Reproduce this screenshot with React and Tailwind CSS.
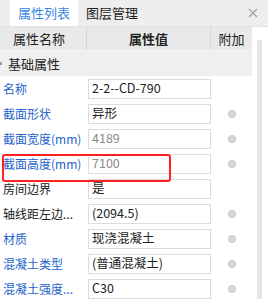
const ROWS = [
  { name: "名称", value: "2-2--CD-790", blue: true },
  { name: "截面形状", value: "异形", blue: true, dot: true },
  { name: "截面宽度(mm)", value: "4189", blue: true, gray: true, dot: true },
  { name: "截面高度(mm)", value: "7100", blue: true, gray: true, dot: true },
  { name: "房间边界", value: "是" },
  { name: "轴线距左边...", value: "(2094.5)", dot: true },
  { name: "材质", value: "现浇混凝土", blue: true, dot: true },
  { name: "混凝土类型", value: "(普通混凝土)", blue: true, dot: true },
  { name: "混凝土强度...", value: "C30", blue: true, dot: true },
];

const cols = "grid grid-cols-[87px_124px_41px]";

export default function App() {
  return (
    <div
      className="relative w-[268px] h-[299px] overflow-hidden bg-white text-[12px] text-[#222]"
      style={{ fontFamily: '"Microsoft YaHei", "Noto Sans CJK SC", "Noto Sans", sans-serif' }}
    >
      {/* tabs */}
      <div className="flex h-[27px] items-stretch bg-[#eeeeef] border-b border-[#e2e2e2] pl-[10px] text-[13px]">
        <div className="flex w-[68px] items-center justify-center bg-white text-[#3a86e6]">属性列表</div>
        <div className="flex w-[68px] items-center justify-center">图层管理</div>
        <div className="flex-1" />
        <div className="flex w-[30px] items-center justify-center">
          <svg width="10" height="10" viewBox="0 0 10 10">
            <path d="M1 1 L9 9 M9 1 L1 9" stroke="#a0a0a0" strokeWidth="1.2" />
          </svg>
        </div>
      </div>

      <div className="flex">
        <div className="w-[252px]">
          {/* header */}
          <div className={`${cols} h-[24px] bg-[#e9e9e9] border-b border-[#f6f6f6] text-[13px]`}>
            <div className="flex items-center pl-[13px] border-r border-[#d6d6d6]">属性名称</div>
            <div className="flex items-center justify-center border-r border-[#d6d6d6] font-bold">属性值</div>
            <div className="flex items-center justify-center">附加</div>
          </div>
          {/* group */}
          <div className="flex h-[25px] items-center bg-[#efefef] text-[13px]">
            <div className="h-[3px] w-[2px] bg-[#999]" />
            <div className="pl-[6px]">基础属性</div>
          </div>
          {ROWS.map((r) => (
            <div key={r.name} className={`${cols} h-[25px] items-center text-[12.5px]`}>
              <div className={`pl-[3px] whitespace-nowrap text-[12px] ${r.blue ? "text-[#2563c9]" : "text-[#222]"}`}>{r.name}</div>
              <div
                className={`flex h-[20px] items-center border border-[#dcdcdc] pl-[3px] ml-[1px] whitespace-nowrap overflow-hidden ${r.gray ? "text-[#8a8a8a]" : "text-[#222]"}`}
              >
                {r.value}
              </div>
              <div className="flex items-center justify-center">
                {r.dot && <div className="h-[8px] w-[8px] rounded-full bg-[#d8d8d8] border border-[#c2c2c2]" />}
              </div>
            </div>
          ))}
        </div>
        {/* scrollbar */}
        <div className="flex-1 pl-[5px] pt-[13px]">
          <div className="h-[300px] w-[5px] bg-[#e6e6e6]" />
        </div>
      </div>

      {/* annotation box */}
      <div className="absolute left-[2px] top-[154px] h-[28px] w-[169px] rounded-[3px] border-2 border-[#ff2020]" />
    </div>
  );
}
